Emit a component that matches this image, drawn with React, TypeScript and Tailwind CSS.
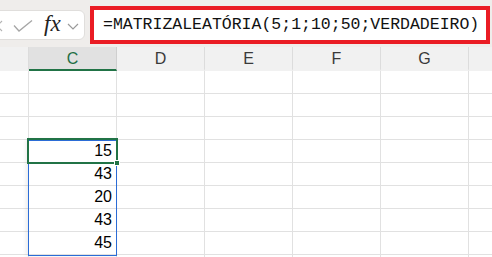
import React from 'react';

const colWidths = [29, 88, 88, 88, 88, 88, 23];
const colNames = ['', 'C', 'D', 'E', 'F', 'G', ''];
const values: Record<number, number> = { 3: 15, 4: 43, 5: 20, 6: 43, 7: 45 };

function Cancel() {
  return (
    <svg width="12" height="12" viewBox="0 0 12 12" fill="none" stroke="#b3b3b3" strokeWidth="1.2">
      <path d="M1 1 L11 11 M11 1 L1 11" />
    </svg>
  );
}

function Check() {
  return (
    <svg width="20" height="12" viewBox="0 0 20 12" fill="none" stroke="#a6a6a6" strokeWidth="1.3">
      <path d="M1 5.5 L6 11 L19 0.5" />
    </svg>
  );
}

function Chevron() {
  return (
    <svg width="12" height="7" viewBox="0 0 12 7" fill="none" stroke="#9a9a9a" strokeWidth="1.2">
      <path d="M1 1 L6 6 L11 1" />
    </svg>
  );
}

function FormulaBar() {
  return (
    <div className="h-[47px] bg-[#efedeb] flex items-start">
      <div className="-ml-[12px] mt-[10px] h-[30px] w-[97px] shrink-0 bg-white border border-[#e0dedc] rounded-[6px] flex items-center">
        <div className="ml-[2px] mt-[1px]">
          <Cancel />
        </div>
        <div className="ml-[10px] mt-[2px]">
          <Check />
        </div>
        <span className="ml-[11px] text-[23px] leading-none italic text-[#222] [font-family:'Liberation_Serif',serif] -mt-[4px]">
          fx
        </span>
        <div className="ml-[6px] mt-[3px]">
          <Chevron />
        </div>
      </div>
      <div className="ml-[5px] mt-[6px] h-[38px] w-[400px] shrink-0 border-[4px] border-[#ea1c24] bg-white flex items-center pl-[9px]">
        <span className="text-[16.5px] text-[#111] [font-family:'Liberation_Mono',monospace] whitespace-nowrap leading-none">
          =MATRIZALEATÓRIA(5;1;10;50;VERDADEIRO)
        </span>
      </div>
    </div>
  );
}

function Grid() {
  const rows = Array.from({ length: 9 }, (_, i) => i);
  return (
    <div className="relative [font-family:'Liberation_Sans',Arial,sans-serif]">
      <div className="flex">
        {colNames.map((name, i) => (
          <div
            key={i}
            style={{ width: colWidths[i] }}
            className={
              'h-[24px] flex items-center justify-center text-[16px] shrink-0 ' +
              (name === 'C'
                ? 'bg-[#e1e1e1] text-[#1e6e45] border-b-2 border-b-[#217346] border-r border-r-[#cfcfcf]'
                : 'bg-[#f1f1f1] text-[#3a3a3a] border-b-2 border-b-[#f1f1f1] ' +
                  (i < colNames.length - 1 ? 'border-r border-r-[#dcdcdc]' : ''))
            }
          >
            <span className="pt-[1px]">{name}</span>
          </div>
        ))}
      </div>
      <div className="h-0 border-t border-[#dcdcdc] -mt-[1px]" />
      {rows.map(r => (
        <div key={r} className="flex">
          {colWidths.map((w, i) => (
            <div
              key={i}
              style={{ width: w }}
              className={
                'h-[23px] shrink-0 bg-white border-b border-b-[#e1e1e1] flex items-center justify-end pr-[4px] text-[16px] text-black ' +
                (i < colWidths.length - 1 ? 'border-r border-r-[#e1e1e1]' : '')
              }
            >
              {i === 1 && values[r] !== undefined ? values[r] : ''}
            </div>
          ))}
        </div>
      ))}
      <div className="absolute left-[28px] top-[93px] w-[89px] h-[116px] border border-[#2b6cd6] shadow-[-2px_0_4px_rgba(0,0,0,0.08)] pointer-events-none" />
      <div className="absolute left-[27px] top-[91px] w-[91px] h-[26px] border-2 border-[#217346] pointer-events-none" />
      <div className="absolute left-[114px] top-[113px] w-[6px] h-[6px] bg-[#217346] border border-white pointer-events-none" />
    </div>
  );
}

export default function App() {
  return (
    <div className="w-[492px] h-[257px] overflow-hidden bg-white">
      <FormulaBar />
      <Grid />
    </div>
  );
}
